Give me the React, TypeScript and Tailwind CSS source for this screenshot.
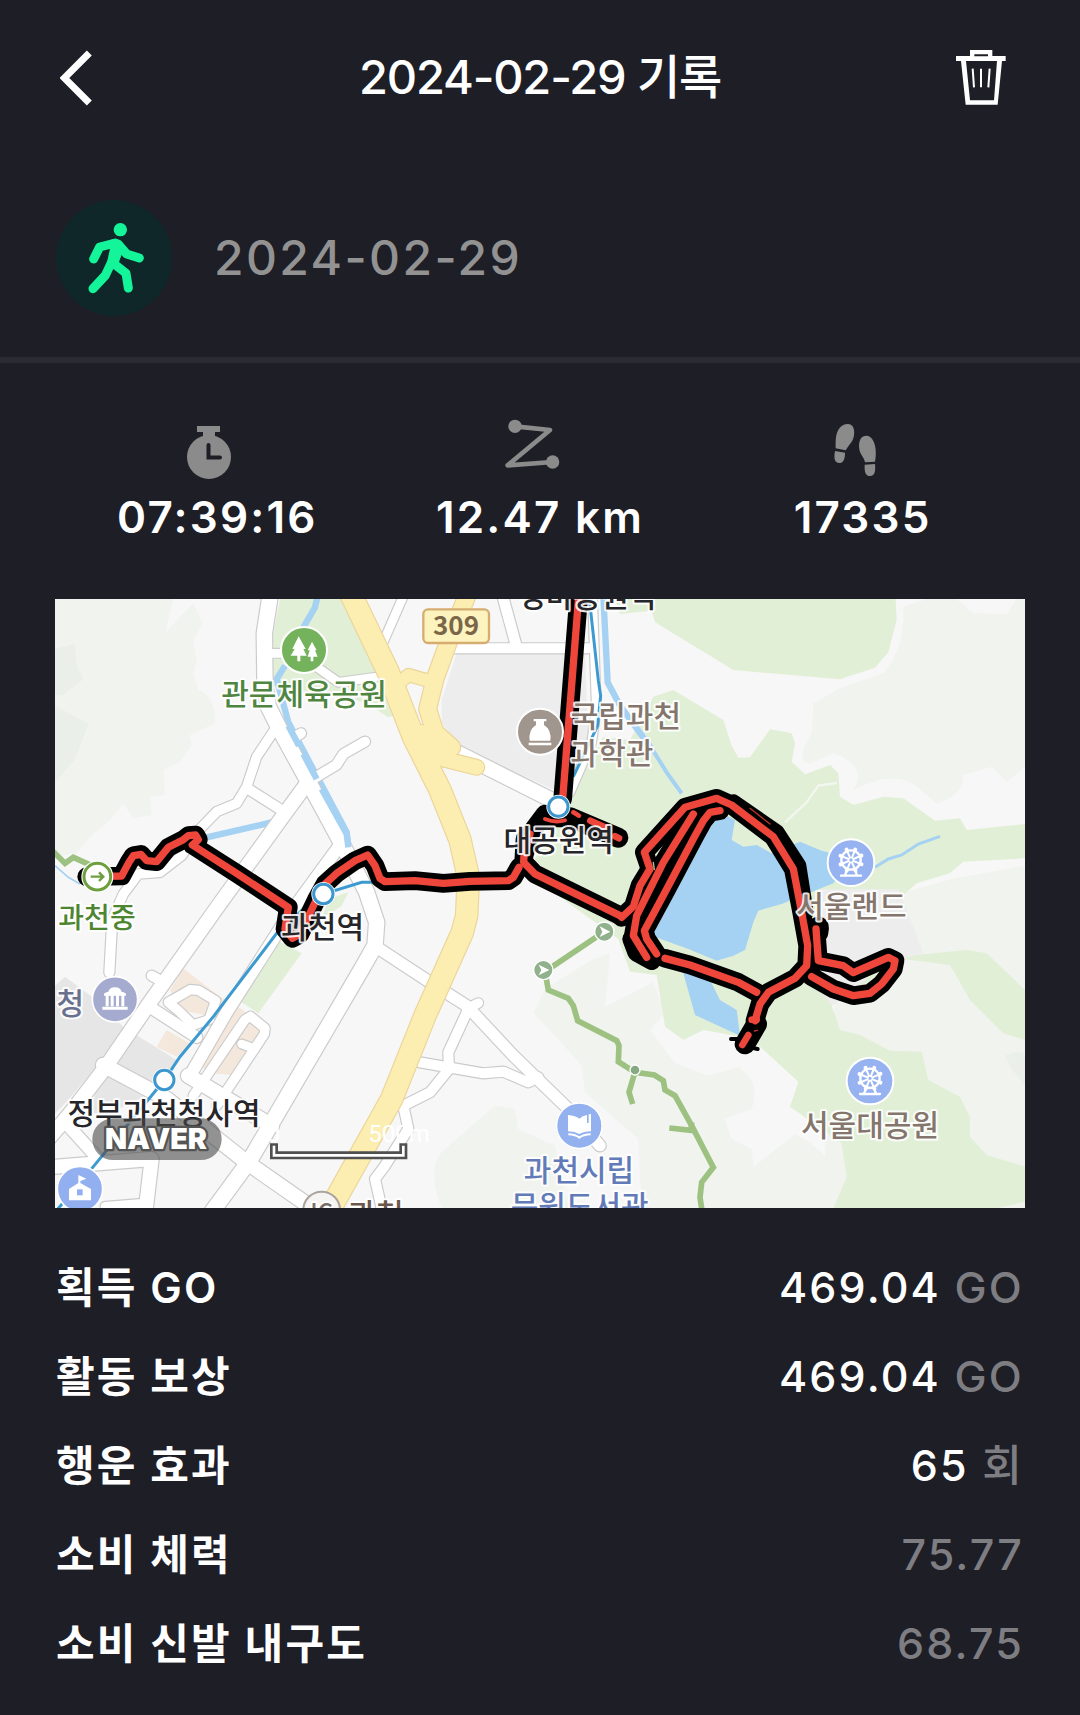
/**
 * 활동 기록 상세 화면
 */

import type { ReactNode } from 'react';

interface RewardRow {
  label: string;
  value: string;
  unit?: string;
  muted?: boolean;
}

interface Road {
  d: string;
  width: number;
}

const REWARDS: RewardRow[] = [
  { label: '획득 GO', value: '469.04', unit: 'GO' },
  { label: '활동 보상', value: '469.04', unit: 'GO' },
  { label: '행운 효과', value: '65', unit: '회' },
  { label: '소비 체력', value: '75.77', muted: true },
  { label: '소비 신발 내구도', value: '68.75', muted: true },
];

const ROADS: Road[] = [
  { d: 'M172 960 L163 1120', width: 30 },
  { d: 'M665 383 L605 473 L575 563 L545 613 L485 638 L435 690 L380 770 L315 820 L250 825 L205 885 L172 960', width: 28 },
  { d: 'M580 570 L690 640', width: 30 },
  { d: 'M760 548 L845 497 L865 465 L930 428', width: 30 },
  { d: 'M700 425 L738 403', width: 30 },
  { d: 'M640 163 L700 163 L780 200 L850 250 L960 235', width: 26 },
  { d: 'M850 745 L700 950 L515 1240 L405 1430', width: 36 },
  { d: 'M275 1218 L425 1315', width: 34 },
  { d: 'M290 1130 L325 1150', width: 30 },
  { d: 'M340 1210 L385 1184 L405 1172 L430 1174 L482 1205 L462 1262 L415 1278 L370 1235 Z', width: 28 },
  { d: 'M415 1490 L570 1262 L586 1252 L630 1288 L628 1305 L485 1520', width: 28 },
  { d: 'M560 1335 L600 1350', width: 26 },
  { d: 'M400 1430 L650 1580', width: 44 },
  { d: 'M145 1398 L335 1500 L575 1690 L790 1840', width: 44 },
  { d: 'M40 1580 L130 1680', width: 36 },
  { d: 'M-20 1705 L290 1680 L270 1850', width: 42 },
  { d: 'M150 1822 L270 1812', width: 26 },
  { d: 'M760 548 L685 650 L490 920 L285 1210 L155 1400 L40 1550 L-20 1620', width: 42 },
  { d: 'M647 -20 L628 103 L630 263 L640 323 L675 393 L760 548 L860 733 L935 880 L965 970 L960 1040 L920 1110 L585 1683 L470 1840', width: 46 },
  { d: 'M965 1045 L1125 1150 L1235 1220 L1375 1370 L1535 1525 L1635 1640', width: 34 },
  { d: 'M1235 1230 L1270 1212', width: 28 },
  { d: 'M1240 1230 L1180 1360 L1182 1410 L1125 1480 L1045 1520 L1060 1590 L990 1700 L960 1740 L985 1850', width: 30 },
  { d: 'M1095 1390 L1285 1423 L1345 1418 L1420 1450 L1450 1435', width: 30 },
  { d: 'M980 140 L1050 -20', width: 26 },
  { d: 'M1340 -20 L1385 145', width: 32 },
  { d: 'M1190 148 L1600 148', width: 30 },
  { d: 'M1612 -20 L1618 150 L1624 330 L1610 430 L1545 580', width: 26 },
  { d: 'M1205 460 L1500 608', width: 44 },
];

const HIGHWAYS: Road[] = [
  { d: 'M1035 300 L1030 255 L1060 228 L1120 245', width: 36 },
  { d: 'M1100 400 L1165 480 L1265 505', width: 44 },
  { d: 'M1240 -20 L1180 130 L1140 240 L1118 330 L1140 400 L1190 445', width: 50 },
  { d: 'M885 -20 L1000 220 L1075 413 L1155 573 L1215 723 L1240 833 L1235 950 L1222 1000 L1110 1250 L1010 1500 L820 1840', width: 64 },
];

// GPS 이동 경로
const TRACKS: string[] = [
  'M95 833 L200 831 L222 790 L235 770 L258 766 L275 785 L305 788 L340 745 L385 722 L400 710 L422 708 L430 722 L412 738 L545 823 L700 925 L690 990 L712 1018 L735 1005 L785 900 L810 855 L845 823 L900 785 L938 768 L960 800 L975 838 L990 848 L1080 845 L1165 853 L1245 847 L1360 845 L1375 835 L1392 805',
  'M1572 -20 L1523 600',
  'M1410 720 L1406 790 L1440 825 L1695 950',
  'M1915 645 L1825 790 L1745 950 L1735 1010 L1775 1075',
  'M1700 955 L1735 923 L1755 860 L1785 810 L1768 760 L1890 625 L1985 598 L2030 618 L2155 713 L2215 810 L2240 940 L2258 1040 L2255 1100 L2220 1138 L2140 1180 L2115 1215 L2100 1265',
  'M1995 635 L1965 640 L1945 665 L1920 710 L1830 880 L1768 995 L1775 1020 L1805 1065',
  'M1830 1078 L1905 1098 L2050 1150 L2105 1180',
  'M2283 990 L2290 1085 L2365 1100 L2395 1121 L2500 1075 L2520 1085 L2515 1110 L2480 1155 L2445 1183 L2395 1190 L2335 1170 L2270 1133',
];

const INK = '#26262a';
const BROWN = '#85766d';

function MapLabel({
  x,
  y,
  color = INK,
  anchor = 'middle',
  size = 90,
  children,
}: {
  x: number;
  y: number;
  color?: string;
  anchor?: 'start' | 'middle';
  size?: number;
  children: ReactNode;
}) {
  return (
    <text
      x={x}
      y={y}
      fill={color}
      fontSize={size}
      textAnchor={anchor}
      fontWeight={500}
      stroke="#fff"
      strokeOpacity={0.9}
      strokeWidth={12}
      strokeLinejoin="round"
      paintOrder="stroke"
    >
      {children}
    </text>
  );
}

function RoadLayer({ roads, casing, fill }: { roads: Road[]; casing: string; fill: string }) {
  return (
    <g fill="none" strokeLinecap="round" strokeLinejoin="round">
      {roads.map((road) => (
        <path key={road.d} d={road.d} stroke={casing} strokeWidth={road.width + 7} />
      ))}
      {roads.map((road) => (
        <path key={road.d} d={road.d} stroke={fill} strokeWidth={road.width} />
      ))}
    </g>
  );
}

function FerrisWheel({ x, y }: { x: number; y: number }) {
  const spokes = [0, 45, 90, 135, 180, 225, 270, 315];
  return (
    <g transform={`translate(${x} ${y})`}>
      <circle r="70" fill="#96b2f0" stroke="#fff" strokeWidth="6" />
      <g stroke="#fff" strokeWidth="6" fill="none" strokeLinecap="round">
        <circle cy="-8" r="29" strokeWidth="7" />
        {spokes.map((deg) => (
          <g key={deg} transform={`rotate(${deg + 22} 0 -8)`}>
            <path d="M0 -8 V-37" />
            <circle cy="-42" r="3" fill="#fff" />
          </g>
        ))}
        <path d="M-12 22 L-18 38 M12 22 L18 38 M-30 39 H30" strokeWidth="7" />
      </g>
      <circle cy="-8" r="7" fill="#96b2f0" stroke="#fff" strokeWidth="4" />
    </g>
  );
}

function Station({ x, y }: { x: number; y: number }) {
  return (
    <g>
      <circle cx={x} cy={y} r="36" fill="#fff" />
      <circle cx={x} cy={y} r="29" fill="#fff" stroke="#3d97cf" strokeWidth="9" />
    </g>
  );
}

function RouteMap() {
  return (
    <svg viewBox="0 0 2910 1827" role="img" aria-label="이동 경로 지도" className="block w-full">
      <rect width="2910" height="1827" fill="#f7f7f7" />

      {/* 산지 */}
      <g fill="#f0f3ee">
        <path d="M0 0 H355 L330 103 L385 43 L415 13 L443 73 L415 123 L425 183 L415 223 L430 273 Q480 290 480 373 L405 408 L410 438 L375 488 L325 513 L330 588 L285 593 L290 648 L235 658 L205 613 L165 663 L105 713 L65 763 L0 770Z" />
        <path d="M2545 23 L2615 0 H2705 L2755 43 L2855 45 L2885 0 H2910 V503 L2855 548 L2810 503 L2725 528 Q2725 590 2645 613 L2585 563 Q2520 510 2395 573 Q2440 500 2335 463 L2265 493 Q2215 490 2270 403 L2275 313 L2355 268 L2485 223 Q2550 150 2545 23Z" />
        <path d="M2510 890 L2690 840 L2910 800 V1827 H2300 L2340 1200Z" />
        <path d="M1435 1243 L1470 1170 L1610 1083 L1665 1063 L1650 1223 L1795 1150 L1830 1240 L1785 1293 L1860 1393 L1960 1430 L2050 1405 Q2120 1450 2090 1530 L2010 1560 L2030 1620 L2090 1650 L2095 1705 L2220 1605 Q2400 1700 2310 1828 H1760 L1750 1620 L1590 1480 L1580 1400 L1500 1310Z" />
        <path d="M1320 1520 L1380 1530 L1390 1590 L1500 1640 L1540 1828 H1160 Q1110 1700 1170 1650Z" />
      </g>
      <g fill="#eaefe9">
        <path d="M0 150 L60 135 L65 200 L85 240 L20 290 L0 285Z" />
        <path d="M0 320 L100 375 L60 480 L0 550Z" />
        <path d="M2850 1370 Q2900 1350 2910 1370 V1460 L2870 1410Z" />
      </g>

      {/* 공원 · 녹지 */}
      <g fill="#e2efd7">
        <path d="M675 0 H870 L1035 345 L1000 355 L930 310 L650 260 L655 100Z" />
        <path d="M1680 0 L1695 45 L1790 35 L1800 70 L2035 213 L2355 241 L2460 206 L2500 160 L2525 63 L2522 0Z" />
        <path d="M1545 590 L1645 413 L1725 423 L1795 293 L1855 273 L2005 363 L2030 440 L2050 476 L2085 475 L2145 391 L2210 403 L2220 433 L2210 488 L2250 526 L2325 498 L2350 523 L2355 593 L2395 618 L2485 593 L2545 598 L2640 665 L2715 658 L2735 693 L2910 675 V778 L2725 788 L2685 823 L2585 853 L2510 920 L2560 1070 L2735 1053 L2795 1063 L2910 1173 V1323 L2845 1303 L2745 1203 L2685 1098 L2545 1080 L2330 1220 L2355 1293 L2415 1308 L2505 1355 L2600 1358 L2620 1443 L2715 1493 L2745 1553 V1613 L2795 1668 L2910 1703 V1808 L2825 1828 H2335 L2375 1733 L2360 1633 L2205 1523 L2230 1448 L2115 1343 L2040 1310 L1945 1293 L1885 1323 L1830 1283 L1805 1128 L1725 1118 L1690 1020 L1440 840 L1440 780Z" />
        <path d="M665 1023 L740 1063 L610 1243 L550 1203Z" />
        <path d="M820 900 L880 880 L860 920 L800 960Z" />
      </g>
      <path d="M2190 670 L2255 610 L2290 560 L2345 552" fill="none" stroke="#f4f6f0" strokeWidth="7" />

      {/* 시설 부지 */}
      <path d="M1205 163 H1590 L1600 420 L1500 573 L1220 448 L1160 373 V303Z" fill="#ededed" />
      <path d="M2300 870 H2530 L2605 1063 L2500 1090 L2330 1220 L2250 1100Z" fill="#ededed" />
      <g fill="#e6e6e6">
        <path d="M0 1160 L30 1133 L110 1193 L215 1293 L40 1503 L0 1543Z" />
        <path d="M235 1303 L365 1383 L295 1478 L185 1393Z" />
        <path d="M150 1423 L265 1493 L165 1543 L95 1543Z" />
      </g>
      <g fill="#f4e8dd">
        <path d="M385 1108 L495 1193 L565 1233 L620 1303 L530 1428 L470 1423 L425 1393 L475 1253 L375 1233 L345 1173Z" />
        <path d="M335 1293 L405 1333 L365 1373 L305 1343Z" />
      </g>

      {/* 호수와 하천 */}
      <g fill="#a5d1f2">
        <path d="M1995 640 L2040 663 L2030 723 L2065 743 L2105 738 L2150 763 L2235 728 L2300 755 L2400 780 L2335 853 L2180 915 L2110 935 L2095 970 L2070 1053 L2035 1070 L1985 1085 L1900 1050 L1790 1010 L1830 940 L1920 760Z" />
        <path d="M1880 1105 L1955 1123 L1995 1203 L2045 1233 L2055 1310 L1920 1248Z" />
      </g>
      <g fill="none" stroke="#a5d1f2" strokeWidth="19">
        <path d="M788 -10 L780 25 L745 85" />
        <path d="M690 200 L665 240 L700 370 L875 700 L880 740" />
        <path d="M455 715 L650 670" />
        <path d="M1645 -10 L1658 250 L1695 320 L1790 450" />
        <path d="M1785 440 L1835 520 L1880 583" strokeWidth="12" />
        <path d="M2460 805 L2500 780 L2540 768 L2590 735 L2655 712" strokeWidth="9" />
        <path d="M0 800 L40 835 L75 855" strokeWidth="5" />
      </g>

      <RoadLayer roads={ROADS} casing="#cbcbcb" fill="#ffffff" />
      <path d="M700 380 L732 440 M745 465 L785 540 M800 570 L875 705 L880 745" fill="none" stroke="#a5d1f2" strokeWidth="19" />
      <RoadLayer roads={HIGHWAYS} casing="#ecd59a" fill="#fceeb1" />

      {/* 지하철 4호선 */}
      <g fill="none" stroke="#3d9ad1" strokeWidth="9">
        <path d="M1602 -10 L1630 245 L1637 290 L1628 380 L1555 533" />
        <path d="M1000 850 H920 L805 885 L740 935 L665 1003 L475 1253 L375 1373 L328 1443 L115 1703 L0 1840" />
      </g>

      {/* 둘레길 */}
      <g fill="none" stroke="#9dc180" strokeWidth="17">
        <path d="M-5 758 L30 793 L55 775 L110 800" />
        <path d="M1648 998 L1470 1118 L1480 1173 L1540 1198 L1555 1220 L1568 1265 L1685 1325 L1692 1340 L1690 1388 L1740 1420 L1798 1428 L1825 1445 L1830 1473 L1860 1490 L1910 1580 L1975 1705 L1940 1750 L1935 1795 L1942 1840" />
        <path d="M1738 1425 L1722 1480 L1733 1515" />
        <path d="M1843 1587 L1908 1594 L1910 1570" />
      </g>
      {[[1648, 998], [1465, 1113]].map(([x, y]) => (
        <g key={x} transform={`translate(${x} ${y})`}>
          <circle r="29" fill="#91b08c" stroke="#fff" strokeWidth="4" />
          <path d="M-14 -16 L18 0 L-14 16 L-6 0Z" fill="#fff" />
        </g>
      ))}
      <circle cx="1740" cy="1413" r="15" fill="#86a983" stroke="#fff" strokeWidth="4" />

      {/* 이동 경로 */}
      <g fill="none" strokeLinecap="round" strokeLinejoin="round">
        {TRACKS.map((d) => (
          <path key={d} d={d} stroke="#000" strokeWidth="56" />
        ))}
        <path d="M1410 760 L1425 705 L1470 645" stroke="#000" strokeWidth="56" />
        <path d="M1470 655 L1545 655 L1690 716" stroke="#000" strokeWidth="60" />
        <path d="M1730 1020 L1745 1060 L1790 1085" stroke="#000" strokeWidth="56" />
        <path d="M2035 610 L2165 700 L2230 800 L2252 940" stroke="#000" strokeWidth="48" />
        <path d="M1905 665 L1955 650 L1790 960 L1760 990 L1740 950 L1805 805Z" fill="#000" />
        <path d="M2288 1000 L2290 985" stroke="#000" strokeWidth="64" />
        <path d="M2105 1275 L2070 1335" stroke="#000" strokeWidth="62" />
        <path d="M2028 1320 L2060 1320 M2085 1345 L2108 1350" stroke="#000" strokeWidth="12" />
        {TRACKS.map((d) => (
          <path key={d} d={d} stroke="#ee463a" strokeWidth="22" />
        ))}
        <path d="M1410 760 L1425 705" stroke="#ee463a" strokeWidth="22" />
        <path d="M1470 660 Q1500 672 1530 664" stroke="#ee463a" strokeWidth="12" />
        <path d="M1555 640 L1572 650" stroke="#ee463a" strokeWidth="14" />
        <path d="M1606 665 L1650 685 M1680 712 L1692 718" stroke="#ee463a" strokeWidth="20" />
        <path d="M2090 1262 L2105 1262" stroke="#ee463a" strokeWidth="20" />
        <path d="M2080 1308 L2062 1338" stroke="#ee463a" strokeWidth="20" />
        <path d="M2098 1296 L2108 1294 M2085 628 L2145 675" stroke="#b8362d" strokeWidth="4" />
        <path d="M1795 790 L1798 812" stroke="#a8c4a0" strokeWidth="4" />
      </g>

      <Station x={1510} y={623} />
      <Station x={805} y={885} />
      <Station x={328} y={1443} />

      <circle cx="127" cy="833" r="48" fill="#fff" />
      <circle cx="127" cy="833" r="40" fill="#fff" stroke="#6d9f3e" strokeWidth="9" />
      <path d="M107 833 H144 M132 820 L145 833 L132 846" fill="none" stroke="#6d9f3e" strokeWidth="7" />

      {/* 관심 지점 아이콘 */}
      <circle cx="747" cy="153" r="69" fill="#75b25c" stroke="#fff" strokeWidth="6" />
      <path d="M731 112 L752 150 H745 L755 170 H736 V187 H727 V170 H707 L719 150 H712Z M771 128 L785 154 H780 L788 173 H775 V187 H767 V173 H758 L764 154 H758Z" fill="#fff" />

      <circle cx="1455" cy="398" r="69" fill="#a1968d" stroke="#fff" strokeWidth="6" />
      <path d="M1436 360 H1474 V367 H1467 V378 Q1490 392 1486 425 H1424 Q1420 392 1443 378 V367 H1436Z M1421 431 H1489 V439 H1421Z" fill="#fff" />

      <circle cx="180" cy="1201" r="68" fill="#a4abce" stroke="#fff" strokeWidth="5" />
      <path d="M147 1184 Q154 1178 160 1178 Q164 1165 180 1165 Q196 1165 200 1178 Q206 1178 213 1184 V1190 H147Z M152 1190 h9 v32 h-9Z M167 1190 h9 v32 h-9Z M183 1190 h9 v32 h-9Z M199 1190 h9 v32 h-9Z M142 1223 H218 V1232 H142Z" fill="#fff" />

      <circle cx="1573" cy="1580" r="68" fill="#93b0ef" stroke="#fff" strokeWidth="4" />
      <path d="M1539 1548 Q1562 1550 1573 1559 Q1582 1550 1596 1548 V1572 H1601 V1546 L1608 1545 V1597 Q1585 1598 1573 1605 Q1560 1598 1539 1597Z" fill="#fff" />
      <path d="M1540 1606 Q1562 1607 1573 1616 Q1584 1607 1607 1606" fill="none" stroke="#fff" strokeWidth="6" />

      <circle cx="75" cy="1770" r="68" fill="#92b0ef" stroke="#fff" strokeWidth="5" />
      <path d="M70 1728 L94 1739 L76 1746 V1752 L108 1770 V1804 H42 V1770 L70 1752Z" fill="#fff" />
      <rect x="66" y="1771" width="17" height="18" fill="#92b0ef" />

      <FerrisWheel x={2388} y={791} />
      <FerrisWheel x={2445} y={1446} />

      <circle cx="800" cy="1833" r="55" fill="#f6f4f2" stroke="#aaa39d" strokeWidth="6" />

      <g className="font-['Noto_Sans_CJK_KR','Noto_Sans_CJK_SC',sans-serif]">
        <rect x="1105" y="31" width="197" height="101" rx="14" fill="#fdf3bf" stroke="#d6ad70" strokeWidth="7" />
        <text x="1203" y="109" textAnchor="middle" fontSize="78" fontWeight="700" fill="#7b6648">309</text>
        <MapLabel x={747} y={317} color="#4f8540">관문체육공원</MapLabel>
        <MapLabel x={126} y={988} size={84} color="#4d8531">과천중</MapLabel>
        <MapLabel x={46} y={1245} color="#69718f">청</MapLabel>
        <MapLabel x={1597} y={25}>경마공원역</MapLabel>
        <MapLabel x={1547} y={385} anchor="start" color={BROWN}>국립과천</MapLabel>
        <MapLabel x={1547} y={495} anchor="start" color={BROWN}>과학관</MapLabel>
        <MapLabel x={1511} y={755}>대공원역</MapLabel>
        <MapLabel x={803} y={1017}>과천역</MapLabel>
        <MapLabel x={327} y={1574}>정부과천청사역</MapLabel>
        <MapLabel x={2389} y={955} color={BROWN}>서울랜드</MapLabel>
        <MapLabel x={2445} y={1612} color={BROWN}>서울대공원</MapLabel>
        <MapLabel x={1572} y={1745} color="#627bb8">과천시립</MapLabel>
        <MapLabel x={1574} y={1855} color="#627bb8">문원도서관</MapLabel>
        <MapLabel x={800} y={1867} size={72} color="#7b7069">IC</MapLabel>
        <MapLabel x={880} y={1877} anchor="start" color="#6b574b">과천</MapLabel>
      </g>

      {/* 네이버 로고와 축척 */}
      <rect x="112" y="1558" width="388" height="125" rx="62" fill="#4a4a4a" fillOpacity="0.6" />
      <g className="font-['Inter','Noto_Sans_CJK_KR',sans-serif]">
        <text x="303" y="1650" textAnchor="middle" fontSize="86" fontWeight="900" fill="#fff" stroke="#555" strokeWidth="14" strokeLinejoin="round" paintOrder="stroke">
          NAVER
        </text>
      </g>
      <g className="font-['Roboto',sans-serif]" fontSize="72" fill="#fff">
        <text x="655" y="1628" textAnchor="middle">0</text>
        <text x="1032" y="1628" textAnchor="middle">500m</text>
      </g>
      <path d="M657 1633 V1669 H1045 V1633" fill="none" stroke="#505050" strokeWidth="24" />
      <path d="M657 1640 V1669 H1045 V1640" fill="none" stroke="#fff" strokeWidth="8" />
    </svg>
  );
}

function StopwatchIcon() {
  return (
    <svg viewBox="0 0 60 60" className="size-15" aria-hidden="true">
      <circle cx="30" cy="38" r="22" fill="#8b8b8b" />
      <path d="M18 7 H41 V13 H36 V18 H24 V13 H18Z" fill="#8b8b8b" />
      <path d="M29.500 26 V38.500 H41" fill="none" stroke="#1e1e26" strokeWidth="4" strokeLinecap="round" />
    </svg>
  );
}

function DistanceIcon() {
  return (
    <svg viewBox="0 0 180 180" className="size-15" aria-hidden="true">
      <path d="M39 22 L144 33 L17 139 L152 129" fill="none" stroke="#8b8b8b" strokeWidth="14" strokeLinecap="round" strokeLinejoin="round" />
      <circle cx="39" cy="22" r="20" fill="#8b8b8b" />
      <circle cx="152" cy="129" r="20" fill="#8b8b8b" />
    </svg>
  );
}

function FootstepsIcon() {
  return (
    <svg viewBox="0 0 180 180" className="size-15" fill="#8b8b8b" aria-hidden="true">
      <path d="M67 15 C82 14 90 28 87 48 C85 68 73 76 68 85 L62 94 L32 88 C32 76 31 56 36 42 C42 25 52 16 67 15Z" />
      <path d="M30 96 L60 101 C60 119 55 132 43 132 C31 132 25 122 30 96Z" />
      <path d="M124 50 C139 50 150 68 152 92 C153 106 152 116 150 128 L120 130 C118 114 103 108 102 82 C102 62 110 50 124 50Z" />
      <path d="M119 137 L150 135 C152 155 150 171 135 171 C121 171 118 158 119 137Z" />
    </svg>
  );
}

function Stat({ icon, value }: { icon: ReactNode; value: string }) {
  return (
    <div className="flex flex-col items-center gap-4">
      <div className="pr-4">{icon}</div>
      <p className="text-[44px] leading-[44px] font-semibold tracking-wider">{value}</p>
    </div>
  );
}

export default function App() {
  return (
    <main className="min-h-screen bg-[#1e1e26] text-white font-['Inter','Noto_Sans_CJK_KR',sans-serif]">
      {/* Header */}
      <header className="grid grid-cols-[1fr_auto_1fr] items-center h-[155px] px-14">
        <button type="button" aria-label="뒤로" className="justify-self-start pl-1">
          <svg viewBox="32 60 96 164" className="w-8 h-14" fill="none">
            <path d="M120 67 L45 142 L120 217" stroke="#fff" strokeWidth="21" />
          </svg>
        </button>
        <h1 className="text-[47px] font-medium tracking-tight">2024-02-29 기록</h1>
        <button type="button" aria-label="기록 삭제" className="justify-self-end pr-[18px]">
          <svg viewBox="49 48 150 165" className="w-[50px] h-[55px]">
            <path fillRule="evenodd" fill="#fff" d="M91 48 H158 V66 H198 V81 H187 L174 212 H78 L64 81 H49 V66 H91Z M104 61 V67 H145 V61Z M79 81 L91 199 H163 L172 81Z" />
            <path d="M99 104 L103 160 M124 104 V160 M150 104 L146 160" stroke="#fff" strokeWidth="6" />
          </svg>
        </button>
      </header>

      {/* 활동 종류와 날짜 */}
      <section className="flex items-center gap-[42px] px-14 pt-[45px] pb-[41px] border-b-6 border-[#2b2b34]">
        <div className="size-[116px] rounded-full bg-[#10272a]">
          <svg viewBox="0 0 348 348" aria-hidden="true">
            <circle cx="193" cy="89" r="20" fill="#14f59a" />
            <g fill="none" stroke="#14f59a" strokeWidth="27" strokeLinecap="round" strokeLinejoin="round">
              <path d="M178 129 L131 141 L113 177" />
              <path d="M186 132 L212 162 L250 174" />
              <path d="M165 190 L148 226 L111 266" />
              <path d="M172 190 L210 220 L217 264" />
            </g>
            <path d="M160 122 Q180 110 196 126 L202 150 L186 194 L176 206 L150 200 L162 146Z" fill="#14f59a" />
          </svg>
        </div>
        <p className="text-5xl font-medium tracking-wider text-[#929292]">2024-02-29</p>
      </section>

      {/* 시간 / 거리 / 걸음 수 */}
      <section className="grid grid-cols-3 px-14 pt-14">
        <Stat icon={<StopwatchIcon />} value="07:39:16" />
        <Stat icon={<DistanceIcon />} value="12.47 km" />
        <Stat icon={<FootstepsIcon />} value="17335" />
      </section>

      <section className="px-[55px] pt-15">
        <RouteMap />
      </section>

      {/* 보상 내역 */}
      <dl className="px-14 pt-[35px] text-[43px] tracking-wider">
        {REWARDS.map((row) => (
          <div key={row.label} className="flex items-center justify-between h-[89px]">
            <dt className="text-[42px] font-semibold">{row.label}</dt>
            <dd className={row.muted ? 'font-medium text-[#7d7d82]' : 'font-medium'}>
              {row.value}
              {row.unit && <span className="text-[#7d7d82]"> {row.unit}</span>}
            </dd>
          </div>
        ))}
      </dl>
    </main>
  );
}
